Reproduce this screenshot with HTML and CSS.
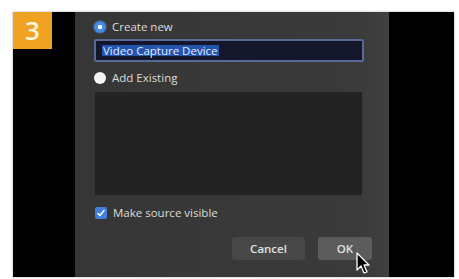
FILE: index.html
```html
<!DOCTYPE html>
<html>
<head>
<meta charset="utf-8">
<link rel="stylesheet" href="styles.css">
</head>
<body>
<div class="frame">
  <div class="badge">3</div>
  <div class="side side-left"></div>
  <div class="dialog">
    <div class="row row-first">
      <span class="radio radio-on"></span>
      <span class="label">Create new</span>
    </div>
    <div class="field"><span class="sel">Video Capture Device</span></div>
    <div class="row row-second">
      <span class="radio radio-off"></span>
      <span class="label">Add Existing</span>
    </div>
    <div class="list"></div>
    <div class="row row-check">
      <span class="check">
        <svg width="12" height="12" viewBox="0 0 12 12"><path d="M3 6.5 L5 8.5 L9 3.5" fill="none" stroke="#fff" stroke-width="1.6" stroke-linecap="round" stroke-linejoin="round"/></svg>
      </span>
      <span class="label">Make source visible</span>
    </div>
    <div class="buttons">
      <div class="btn btn-cancel">Cancel</div>
      <div class="btn btn-ok">OK
        <svg class="cursor" width="16" height="24" viewBox="0 0 16 24"><path d="M1 1 L1 18 L5 14 L8 21 L11 20 L8 13 L13 13 Z" fill="#000" stroke="#fff" stroke-width="1.3" stroke-linejoin="round"/></svg>
      </div>
    </div>
  </div>
  <div class="side side-right"></div>
</div>
</body>
</html>
```
FILE: styles.css
```css
html, body {
  margin: 0;
  padding: 0;
  background: #ffffff;
}
body {
  font-family: "Open Sans", "Liberation Sans", sans-serif;
  width: 459px;
  height: 279px;
  overflow: hidden;
}
.frame {
  position: relative;
  margin: 12px 0 0 13px;
  width: 441px;
  height: 265px;
  display: flex;
  background: #000;
  box-shadow: 0 0 2px rgba(0,0,0,0.35);
}
.badge {
  position: absolute;
  left: 0;
  top: 0;
  width: 39px;
  height: 37px;
  background: #f0a323;
  color: #fff4dc;
  font-family: "Open Sans", "Liberation Sans", sans-serif;
  font-size: 26px;
  line-height: 37px;
  text-align: center;
  font-weight: 600;
}
.side-left { width: 62px; background: #000; }
.side-right { width: 65px; background: #000; }
.dialog {
  width: 314px;
  background: linear-gradient(to right, #363636 0%, #3a3a3a 90%, #414141 100%);
  padding: 0 17px 0 19px;
  box-sizing: border-box;
  display: flex;
  flex-direction: column;
  color: #dcdcdc;
  font-size: 11.5px;
}
.row {
  display: flex;
  align-items: center;
  height: 12px;
  gap: 6px;
}
.row-first { margin-top: 9px; }
.row-second { margin-top: 10px; }
.row-check { margin-top: 12px; padding-left: 1px; }
.label { line-height: 12px; white-space: nowrap; }
.radio {
  width: 12px;
  height: 12px;
  border-radius: 50%;
  box-sizing: border-box;
  flex: none;
}
.radio-on {
  background: radial-gradient(circle, #eef4ff 0 2px, #4a8ee8 2.5px, #3f7fd8 100%);
  box-shadow: 0 0 2px #6aa0f0;
}
.radio-off {
  background: #f4f4f4;
}
.field {
  margin-top: 6px;
  width: 270px;
  height: 23px;
  box-sizing: border-box;
  border: 2px solid #5a6a98;
  border-radius: 2px;
  background: #14172a;
  display: flex;
  align-items: center;
  padding-left: 6px;
}
.sel {
  background: #2355b0;
  color: #e4ecff;
  font-size: 11.5px;
  line-height: 11px;
  height: 11px;
  padding: 0 1px;
  white-space: nowrap;
}
.list {
  margin-top: 8px;
  margin-left: 1px;
  width: 267px;
  height: 103px;
  background: #232323;
}
.check {
  width: 12px;
  height: 12px;
  border-radius: 2px;
  background: #3f80dc;
  flex: none;
  display: flex;
}
.buttons {
  margin-top: 18px;
  display: flex;
  justify-content: flex-end;
  gap: 13px;
}
.btn {
  position: relative;
  height: 23px;
  line-height: 23px;
  text-align: center;
  font-size: 11.5px;
  font-weight: 600;
  color: #e2e2e2;
  border-radius: 3px;
}
.btn-cancel {
  width: 73px;
  background: #474747;
}
.btn-ok {
  width: 54px;
  background: #5c5c5c;
}
.cursor {
  position: absolute;
  left: 38px;
  top: 15px;
}
```
